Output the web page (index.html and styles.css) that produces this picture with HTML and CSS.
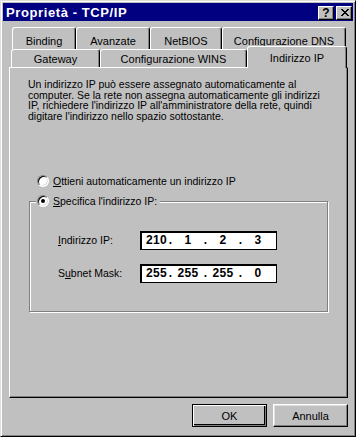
FILE: index.html
```html
<!DOCTYPE html>
<html lang="it">
<head>
    <meta charset="UTF-8">
    <title>Proprietà - TCP/IP</title>
    <link rel="stylesheet" href="styles.css">
</head>
<body>
    <div class="window">
        <div class="titlebar">
            <span class="title">Proprietà - TCP/IP</span>
            <div class="caption-buttons">
                <button class="cap-btn help">?</button>
                <button class="cap-btn close">
                    <svg width="8" height="7" viewBox="0 0 8 7">
                        <path d="M0 0h2v1h1v1h2v-1h1v-1h2v1h-1v1h-1v1h-1v1h1v1h1v1h1v1h-2v-1h-1v-1h-2v1h-1v1h-2v-1h1v-1h1v-1h1v-1h-1v-1h-1v-1h-1z" fill="#000"/>
                    </svg>
                </button>
            </div>
        </div>

        <div class="tabs">
            <div class="tab-row back">
                <div class="tab tab-binding">Binding</div>
                <div class="tab tab-avanzate">Avanzate</div>
                <div class="tab tab-netbios">NetBIOS</div>
                <div class="tab tab-dns">Configurazione DNS</div>
            </div>
            <div class="tab-row front">
                <div class="tab tab-gateway">Gateway</div>
                <div class="tab tab-wins">Configurazione WINS</div>
                <div class="tab tab-ip active">Indirizzo IP</div>
            </div>
        </div>

        <div class="panel">
            <p class="intro">Un indirizzo IP può essere assegnato automaticamente al computer. Se la rete non assegna automaticamente gli indirizzi IP, richiedere l'indirizzo IP all'amministratore della rete, quindi digitare l'indirizzo nello spazio sottostante.</p>

            <label class="radio auto">
                <span class="radio-dot"></span>
                <span><u>O</u>ttieni automaticamente un indirizzo IP</span>
            </label>

            <fieldset class="group">
                <legend>
                    <label class="radio">
                        <span class="radio-dot checked"></span>
                        <span><u>S</u>pecifica l'indirizzo IP:</span>
                    </label>
                </legend>

                <div class="field-row">
                    <span class="field-label"><u>I</u>ndirizzo IP:</span>
                    <div class="ip-box">
                        <span class="octet first">210</span><span class="dot">.</span>
                        <span class="octet">1</span><span class="dot">.</span>
                        <span class="octet">2</span><span class="dot">.</span>
                        <span class="octet">3</span>
                    </div>
                </div>

                <div class="field-row">
                    <span class="field-label">S<u>u</u>bnet Mask:</span>
                    <div class="ip-box">
                        <span class="octet first">255</span><span class="dot">.</span>
                        <span class="octet">255</span><span class="dot">.</span>
                        <span class="octet">255</span><span class="dot">.</span>
                        <span class="octet">0</span>
                    </div>
                </div>
            </fieldset>
        </div>

        <div class="actions">
            <button class="btn default">OK</button>
            <button class="btn">Annulla</button>
        </div>
    </div>
</body>
</html>
```

FILE: styles.css
```css
body {
    margin: 0;
    background-color: #c0c0c0;
    font-family: "Liberation Sans", Arial, sans-serif;
    font-size: 10.5px;
    color: #000;
}

.window {
    width: 356px;
    height: 437px;
    box-sizing: border-box;
    padding: 2px;
    background-color: #c0c0c0;
    border: 1px solid;
    border-color: #dfdfdf #000 #000 #dfdfdf;
    box-shadow: inset 1px 1px #fff, inset -1px -1px #808080;
    display: flex;
    flex-direction: column;
}

/* title bar */
.titlebar {
    height: 18px;
    background-color: #000080;
    color: #fff;
    display: flex;
    align-items: center;
    justify-content: space-between;
    padding: 0 1px 0 3px;
}

.title {
    font-weight: bold;
    font-size: 13px;
    letter-spacing: 0.6px;
}

.caption-buttons {
    display: flex;
    gap: 2px;
    margin-top: 1px;
}

.cap-btn {
    width: 16px;
    height: 14px;
    padding: 0;
    margin: 0;
    box-sizing: border-box;
    background-color: #c0c0c0;
    border: 1px solid;
    border-color: #fff #000 #000 #fff;
    box-shadow: inset -1px -1px #808080;
    display: flex;
    align-items: center;
    justify-content: center;
    font-family: "Liberation Sans", Arial, sans-serif;
    font-weight: bold;
    font-size: 12px;
    line-height: 1;
    color: #000;
}

.cap-btn svg {
    display: block;
    margin-left: 1px;
}

/* tabs */
.tabs {
    margin-top: 6px;
    position: relative;
    z-index: 2;
}

.tab-row {
    display: flex;
    margin-left: 8px;
}

.tab {
    box-sizing: border-box;
    background-color: #c0c0c0;
    border-left: 1px solid #fff;
    border-top: 1px solid #fff;
    border-right: 1px solid #000;
    border-radius: 3px 3px 0 0;
    box-shadow: inset -1px 0 #808080;
    text-align: center;
    font-size: 11px;
}

.back .tab {
    height: 22px;
    padding-top: 7px;
}

.front {
    height: 18px;
    align-items: flex-end;
}

.front .tab {
    height: 18px;
    padding-top: 3px;
}

.front .tab.active {
    height: 22px;
    padding-top: 5px;
    margin-bottom: -1px;
    position: relative;
    z-index: 3;
}

.tab-binding { width: 64px; margin-left: 1px; }
.tab-avanzate { width: 74px; }
.tab-netbios { width: 72px; }
.tab-dns { width: 124px; }

.tab-gateway { width: 89px; }
.tab-wins { width: 147px; }
.tab-ip { width: 100px; }

/* main panel */
.panel {
    margin-left: 6px;
    width: 339px;
    height: 331px;
    box-sizing: border-box;
    border: 1px solid;
    border-color: #fff #000 #000 #fff;
    box-shadow: inset -1px -1px #808080;
    padding-top: 11px;
}

.intro {
    margin: 0 0 0 18px;
    width: 300px;
    line-height: 10.7px;
}

.radio {
    display: flex;
    align-items: center;
    gap: 4px;
    line-height: 13px;
}

.radio u,
.field-label u {
    text-decoration-thickness: 1px;
    text-underline-offset: 1px;
}

.radio.auto {
    margin: 53px 0 0 27px;
}

.radio-dot {
    width: 12px;
    height: 12px;
    box-sizing: border-box;
    border-radius: 50%;
    border: 1px solid;
    border-color: #808080 #fff #fff #808080;
    box-shadow: inset 1px 1px #000, inset -1px -1px #dfdfdf;
    background-color: #fff;
    display: flex;
    align-items: center;
    justify-content: center;
}

.radio-dot.checked::after {
    content: "";
    width: 4px;
    height: 4px;
    border-radius: 50%;
    background-color: #000;
}

.group {
    margin: 7px 19px 0 19px;
    padding: 23px 0 28px 0;
    border: 1px solid #808080;
    box-shadow: inset 1px 1px #fff, 1px 1px #fff;
}

.group legend {
    margin-left: 6px;
    padding: 0 3px 0 1px;
    background-color: #c0c0c0;
}

.field-row {
    display: flex;
    align-items: center;
    margin-left: 28px;
}

.field-row + .field-row {
    margin-top: 14px;
}

.field-label {
    width: 82px;
}

.ip-box {
    width: 137px;
    height: 19px;
    box-sizing: border-box;
    background-color: #fff;
    border: 1px solid #000;
    box-shadow: inset 1px 1px #000;
    display: flex;
    align-items: center;
    padding-left: 5px;
    font-weight: bold;
    font-size: 12px;
    letter-spacing: 0.3px;
}

.octet {
    width: 30px;
    text-align: center;
}

.octet.first {
    width: 22px;
    text-align: left;
}

.dot {
    width: 5px;
    text-align: center;
}

/* bottom buttons */
.actions {
    display: flex;
    justify-content: flex-end;
    gap: 6px;
    margin-top: 6px;
    padding-right: 5px;
}

.btn {
    width: 75px;
    height: 23px;
    box-sizing: border-box;
    background-color: #c0c0c0;
    border: 1px solid;
    border-color: #fff #000 #000 #fff;
    box-shadow: inset -1px -1px #808080, inset 1px 1px #dfdfdf;
    font-family: "Liberation Sans", Arial, sans-serif;
    font-size: 11px;
    color: #000;
    padding: 0;
}

.btn.default {
    border: 1px solid #000;
    box-shadow: inset 1px 1px #fff, inset -1px -1px #808080, inset -2px -2px #000;
}
```
